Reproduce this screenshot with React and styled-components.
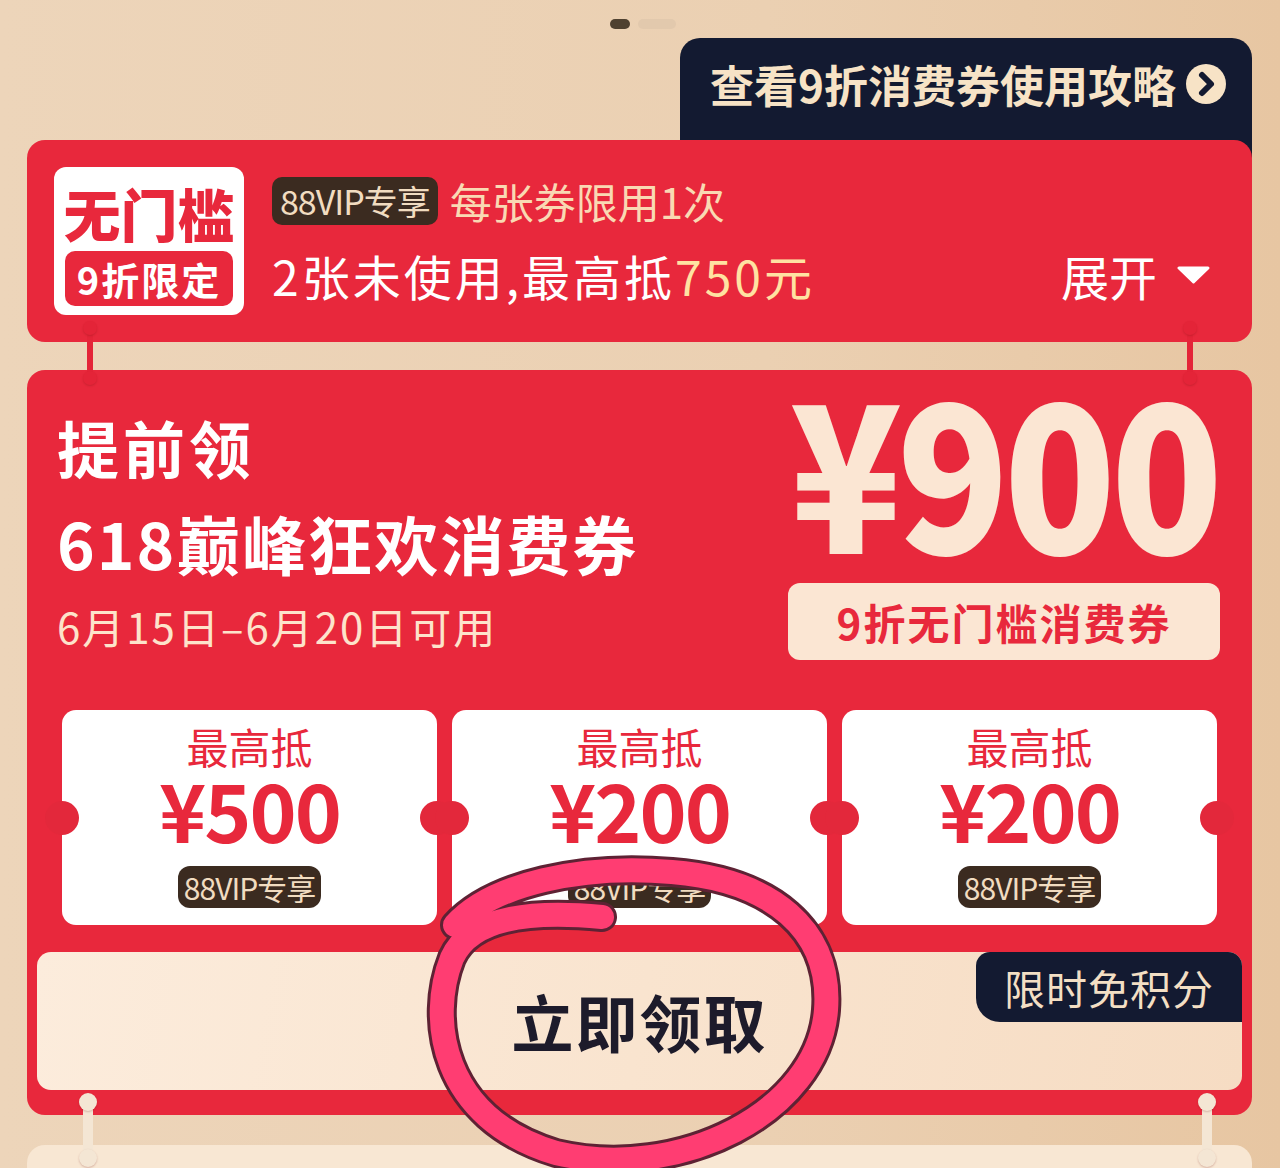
import React from "react";
import styled, { createGlobalStyle } from "styled-components";

const GlobalStyle = createGlobalStyle`
  html, body {
    margin: 0;
    padding: 0;
  }
  body {
    font-family: "Noto Sans CJK SC", "Noto Sans", sans-serif;
    background: #ebcfb0;
  }
`;

const RED = "#e8283c";
const CREAM = "#fbe6d3";
const NAVY = "#131a31";

const Page = styled.div`
  position: relative;
  width: 1280px;
  height: 1168px;
  overflow: hidden;
  box-sizing: border-box;
  padding: 19px 28px 0 27px;
  display: flex;
  flex-direction: column;
  background: linear-gradient(90deg, #edd5ba 0%, #ebd0b2 60%, #e7c6a2 100%);

  & > * {
    flex-shrink: 0;
  }
`;

const Dots = styled.div`
  display: flex;
  justify-content: center;
  gap: 8px;
  margin: 0 0 9px 7px;
`;

const Dot = styled.span`
  width: ${(p) => (p.$active ? 20 : 38)}px;
  height: 10px;
  border-radius: 5px;
  background: ${(p) => (p.$active ? "#4f4130" : "#e2c9ad")};
`;

const GuideTab = styled.div`
  align-self: flex-end;
  width: 572px;
  height: 122px;
  margin-bottom: -20px;
  box-sizing: border-box;
  padding: 20px 0 0 30px;
  background: ${NAVY};
  border-radius: 20px 20px 0 0;
  display: flex;
  align-items: flex-start;
  gap: 10px;
`;

const GuideText = styled.span`
  font-size: 44px;
  font-weight: 700;
  line-height: 52px;
  color: #f7e3c6;
`;

const GuideIcon = styled.svg`
  margin-top: 6px;
  flex-shrink: 0;
`;

const SummaryCard = styled.div`
  position: relative;
  z-index: 1;
  height: 202px;
  box-sizing: border-box;
  padding: 0 42px 0 27px;
  background: ${RED};
  border-radius: 18px;
  display: flex;
  align-items: center;
  gap: 28px;
`;

const Logo = styled.div`
  width: 190px;
  height: 148px;
  box-sizing: border-box;
  padding-top: 12px;
  background: #fff;
  border-radius: 12px;
  display: flex;
  flex-direction: column;
  align-items: center;
  flex-shrink: 0;
`;

const LogoTitle = styled.div`
  color: ${RED};
  font-size: 57px;
  font-weight: 900;
  line-height: 66px;
`;

const LogoBadge = styled.div`
  margin-top: 6px;
  width: 168px;
  height: 55px;
  border-radius: 10px;
  background: ${RED};
  color: #fff;
  font-size: 38px;
  font-weight: 700;
  letter-spacing: 2px;
  display: flex;
  align-items: center;
  justify-content: center;
`;

const Info = styled.div`
  flex: 1;
  align-self: flex-start;
  padding-top: 37px;
  display: flex;
  flex-direction: column;
  gap: 24px;
`;

const InfoRow = styled.div`
  display: flex;
  align-items: center;
  justify-content: ${(p) => (p.$spread ? "space-between" : "flex-start")};
  gap: 12px;
`;

const VipBadge = styled.span`
  display: inline-block;
  height: ${(p) => (p.$small ? 42 : 48)}px;
  line-height: ${(p) => (p.$small ? 42 : 48)}px;
  padding: 0 ${(p) => (p.$small ? 6 : 8)}px;
  border-radius: ${(p) => (p.$small ? 12 : 10)}px;
  background: #3b2b20;
  color: #f1dcc0;
  font-size: ${(p) => (p.$small ? 30 : 34)}px;
  margin-top: ${(p) => (p.$small ? 26 : 0)}px;
  letter-spacing: -1px;
`;

const LimitText = styled.span`
  font-size: 42px;
  line-height: 48px;
  color: #f9d9b3;
`;

const CountText = styled.span`
  font-size: 48px;
  line-height: 52px;
  color: #fff;
  letter-spacing: 3px;
`;

const Highlight = styled.span`
  color: #ffe2a2;
`;

const Expand = styled.span`
  display: flex;
  align-items: center;
  gap: 20px;
  font-size: 48px;
  line-height: 52px;
  color: #fff;
`;

const MainCard = styled.div`
  position: relative;
  z-index: 2;
  margin-top: 28px;
  box-sizing: border-box;
  padding: 0 10px 25px;
  background: ${RED};
  border-radius: 18px;
`;

const Pin = styled.span`
  position: absolute;
  top: ${(p) => p.$top}px;
  left: ${(p) => p.$left}px;
  width: ${(p) => p.$width}px;
  height: ${(p) => p.$height}px;
  border-radius: ${(p) => p.$width / 2}px;
  background: ${(p) => p.$color};

  &::before,
  &::after {
    content: "";
    position: absolute;
    left: 50%;
    width: ${(p) => p.$width + 8}px;
    height: ${(p) => p.$width + 8}px;
    margin-left: ${(p) => -(p.$width + 8) / 2}px;
    border-radius: 50%;
    background: ${(p) => p.$color};
    box-shadow: 0 1px 2px rgba(120, 20, 20, 0.25);
  }
  &::before {
    top: -4px;
  }
  &::after {
    bottom: -4px;
  }
`;

const Header = styled.div`
  display: flex;
  justify-content: space-between;
  padding: 20px 22px 0 20px;
`;

const LeftCol = styled.div`
  margin-top: 20px;
  display: flex;
  flex-direction: column;
  color: #fff;
`;

const Kicker = styled.div`
  font-size: 62px;
  font-weight: 700;
  line-height: 74px;
  letter-spacing: 4px;
`;

const Headline = styled.div`
  margin-top: 18px;
  font-size: 64px;
  font-weight: 700;
  line-height: 80px;
  letter-spacing: 2px;
`;

const DateText = styled.div`
  margin-top: 19px;
  font-size: 42px;
  line-height: 50px;
  letter-spacing: 2px;
  color: #fde3cb;
`;

const RightCol = styled.div`
  width: 432px;
  display: flex;
  flex-direction: column;
  align-items: center;
`;

const BigPrice = styled.div`
  font-size: 205px;
  font-weight: 900;
  line-height: 150px;
  letter-spacing: -6px;
  color: ${CREAM};
  white-space: nowrap;
  transform: scaleX(0.9);
`;

const PriceBox = styled.div`
  margin-top: 43px;
  width: 100%;
  height: 77px;
  border-radius: 12px;
  background: ${CREAM};
  color: ${RED};
  font-size: 42px;
  font-weight: 700;
  letter-spacing: 2px;
  display: flex;
  align-items: center;
  justify-content: center;
`;

const Tickets = styled.div`
  margin-top: 50px;
  padding: 0 25px;
  display: grid;
  grid-template-columns: repeat(3, 1fr);
  gap: 15px;
`;

const Ticket = styled.div`
  position: relative;
  height: 215px;
  box-sizing: border-box;
  padding-top: 14px;
  background: #fff;
  border-radius: 14px;
  display: flex;
  flex-direction: column;
  align-items: center;

  &::before,
  &::after {
    content: "";
    position: absolute;
    top: 91px;
    width: 34px;
    height: 34px;
    border-radius: 50%;
    background: #e3283b;
  }
  &::before {
    left: -17px;
  }
  &::after {
    right: -17px;
  }
`;

const TicketLabel = styled.div`
  font-size: 42px;
  line-height: 44px;
  color: ${RED};
`;

const TicketPrice = styled.div`
  margin-top: 8px;
  font-size: 80px;
  font-weight: 700;
  line-height: 64px;
  letter-spacing: -2px;
  color: ${RED};
`;

const ClaimButton = styled.div`
  position: relative;
  margin-top: 27px;
  height: 138px;
  border-radius: 14px;
  overflow: hidden;
  background: linear-gradient(100deg, #fcecdc 0%, #f9e4cf 50%, #f6dcc3 100%);
  display: flex;
  align-items: center;
  justify-content: center;
`;

const ClaimText = styled.span`
  font-size: 62px;
  font-weight: 700;
  letter-spacing: 2px;
  color: #1d1b2b;
`;

const FreeTag = styled.span`
  position: absolute;
  top: 0;
  right: 0;
  width: 266px;
  height: 70px;
  border-radius: 14px 0 0 24px;
  background: ${NAVY};
  color: #f3dfc4;
  font-size: 41px;
  letter-spacing: 1px;
  display: flex;
  align-items: center;
  justify-content: center;
`;

const NextCard = styled.div`
  position: relative;
  z-index: 3;
  margin-top: 30px;
  height: 80px;
  background: #f8e7d3;
  border-radius: 18px 18px 0 0;
`;

const Annotation = styled.svg`
  position: absolute;
  top: 0;
  left: 0;
  z-index: 10;
  pointer-events: none;
`;

const tickets = [
  { price: "¥500" },
  { price: "¥200" },
  { price: "¥200" },
];

const circlePath =
  "M 602 917 C 540 911, 472 914, 452 958 C 428 1018, 440 1118, 556 1153 C 680 1182, 818 1112, 826 1010 C 832 930, 772 880, 672 872 C 582 864, 492 884, 455 925";

export default function App() {
  return (
    <>
      <GlobalStyle />
      <Page>
        <Dots>
          <Dot $active />
          <Dot />
        </Dots>

        <GuideTab>
          <GuideText>查看9折消费券使用攻略</GuideText>
          <GuideIcon width="40" height="40" viewBox="0 0 40 40">
            <circle cx="20" cy="20" r="20" fill="#f7e3c6" />
            <path
              d="M16 11 L25 20 L16 29"
              fill="none"
              stroke={NAVY}
              strokeWidth="6"
              strokeLinecap="round"
              strokeLinejoin="round"
            />
          </GuideIcon>
        </GuideTab>

        <SummaryCard>
          <Logo>
            <LogoTitle>无门槛</LogoTitle>
            <LogoBadge>9折限定</LogoBadge>
          </Logo>
          <Info>
            <InfoRow>
              <VipBadge>88VIP专享</VipBadge>
              <LimitText>每张券限用1次</LimitText>
            </InfoRow>
            <InfoRow $spread>
              <CountText>
                2张未使用,最高抵<Highlight>750元</Highlight>
              </CountText>
              <Expand>
                展开
                <svg width="33" height="18" viewBox="0 0 33 18">
                  <path d="M2 2 H31 L16.5 16 Z" fill="#fff" strokeLinejoin="round" stroke="#fff" strokeWidth="3" />
                </svg>
              </Expand>
            </InfoRow>
          </Info>
        </SummaryCard>

        <MainCard>
          <Pin $top={-45} $left={60} $width={6} $height={56} $color="#e42438" />
          <Pin $top={-45} $left={1160} $width={6} $height={56} $color="#e42438" />

          <Header>
            <LeftCol>
              <Kicker>提前领</Kicker>
              <Headline>618巅峰狂欢消费券</Headline>
              <DateText>6月15日–6月20日可用</DateText>
            </LeftCol>
            <RightCol>
              <BigPrice>¥900</BigPrice>
              <PriceBox>9折无门槛消费券</PriceBox>
            </RightCol>
          </Header>

          <Tickets>
            {tickets.map((t, i) => (
              <Ticket key={i}>
                <TicketLabel>最高抵</TicketLabel>
                <TicketPrice>{t.price}</TicketPrice>
                <VipBadge $small>88VIP专享</VipBadge>
              </Ticket>
            ))}
          </Tickets>

          <ClaimButton>
            <ClaimText>立即领取</ClaimText>
            <FreeTag>限时免积分</FreeTag>
          </ClaimButton>
        </MainCard>

        <NextCard>
          <Pin $top={-48} $left={56} $width={10} $height={66} $color="#f4e6d4" />
          <Pin $top={-48} $left={1175} $width={10} $height={66} $color="#f4e6d4" />
        </NextCard>

        <Annotation width="1280" height="1168" viewBox="0 0 1280 1168">
          <path d={circlePath} fill="none" stroke="#5e2234" strokeWidth="30" strokeLinecap="round" />
          <path d={circlePath} fill="none" stroke="#ff3d72" strokeWidth="24" strokeLinecap="round" />
        </Annotation>
      </Page>
    </>
  );
}
